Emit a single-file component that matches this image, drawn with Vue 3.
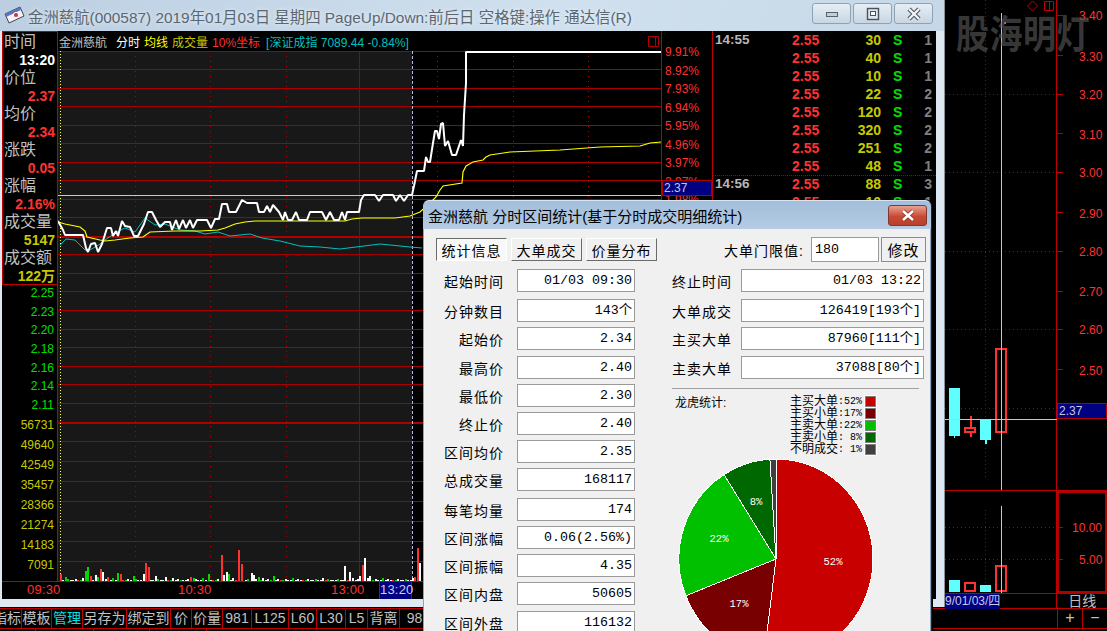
<script setup>
const stats = [
  ['时间', '13:20', 'white'],
  ['价位', '2.37', 'red'],
  ['均价', '2.34', 'red'],
  ['涨跌', '0.05', 'red'],
  ['涨幅', '2.16%', 'red'],
  ['成交量', '5147', 'olive'],
  ['成交额', '122万', 'olive']
]
const priceAxis = ['2.25', '2.23', '2.20', '2.18', '2.16', '2.14', '2.11']
const volAxis = ['56731', '49640', '42549', '35457', '28366', '21274', '14183', '7091']
const percents = ['9.91%', '8.92%', '7.93%', '6.94%', '5.95%', '4.96%', '3.97%', '2.97%', '1.98%']

const gridLines = [51, 69, 88, 106, 125, 143, 162, 180, 199, 217, 254, 273, 291, 310, 329, 347, 366, 384, 403, 441, 461, 481, 501, 521, 541, 561]
const dottedX = [135, 210, 286, 437, 513, 588]

const whiteLine = '58,221 63,230 65,235 83,235 86,248 88,252 91,244 95,243 98,252 102,244 107,228 111,228 113,236 116,231 118,236 122,221 125,226 130,227 134,236 138,236 144,224 148,212 152,212 156,220 160,227 165,222 170,222 172,230 176,220 179,229 183,220 186,228 190,220 193,228 197,220 207,220 211,228 215,219 219,219 222,204 227,204 229,212 236,212 242,200 247,203 257,203 259,212 264,212 267,206 270,212 273,205 279,212 283,220 285,212 288,220 292,220 296,212 299,220 307,220 310,212 322,212 326,220 330,212 334,220 339,220 342,212 345,220 347,212 359,212 361,200 364,195 375,195 379,201 383,195 393,195 396,201 400,195 404,201 408,195 412,195 414,186 416,176 417,171 424,171 426,157 428,162 430,162 433,143 435,131 437,131 439,139 441,124 443,123 445,146 448,141 452,155 456,155 459,146 461,140 463,146 464,115 466,83 466,52 661,52'
const avgLine = '58,222 65,224 80,227 85,231 87,237 100,240 105,241 115,240 130,238 143,237 150,232 175,231 200,231 218,230 225,228 235,224 245,222 255,221 345,221 352,219 362,218 395,218 410,216 420,212 430,203 436,197 440,190 443,186 462,183 463,172 466,166 473,162 483,160 486,157 490,155 510,152 560,150 600,147 640,146 650,143 661,142'
const indexLine = '60,245 66,239 75,240 85,250 90,250 100,244 105,240 115,233 125,228 135,232 145,218 155,225 165,224 180,230 195,231 205,234 218,232 230,236 250,234 262,238 280,241 300,246 320,247 340,249 380,244 410,247 422,248'

const bigBars = [
  [60, 7, 'r'], [65, 4, 'g'], [85, 10, 'g'], [87, 14, 'g'], [90, 5, 'r'], [95, 6, 'w'], [97, 4, 'g'],
  [100, 12, 'r'], [102, 9, 'w'], [107, 4, 'r'], [117, 8, 'g'], [120, 7, 'r'], [133, 5, 'g'],
  [143, 7, 'w'], [145, 18, 'r'], [148, 14, 'r'], [155, 5, 'w'], [165, 4, 'w'], [190, 4, 'r'], [193, 3, 'g'],
  [208, 7, 'g'], [221, 26, 'r'], [223, 6, 'w'], [226, 9, 'w'], [228, 7, 'g'], [238, 31, 'r'], [241, 17, 'r'],
  [251, 8, 'w'], [253, 6, 'w'], [258, 4, 'g'], [273, 5, 'g'], [344, 15, 'w'], [349, 9, 'w'], [359, 5, 'w'],
  [362, 16, 'r'], [364, 23, 'w'], [367, 3, 'w'], [369, 5, 'w'], [414, 4, 'r'], [417, 33, 'r'], [419, 18, 'w']
]
const barColors = { r: '#ff3232', g: '#00d800', w: '#ffffff' }
const fillHeights = [1, 1, 2, 1, 1, 2, 1, 1, 3, 1, 2, 1]
const fillKinds = ['w', 'w', 'g', 'w', 'w', 'w', 'r', 'g', 'w']
const volumeBars = []
for (let i = 0; i < 141; i++) {
  const x = Math.round(62 + i * 2.5)
  if (bigBars.some((b) => Math.abs(b[0] - x) < 2)) continue
  volumeBars.push({ x, h: fillHeights[i % 12], color: barColors[fillKinds[i % 9]] })
}
bigBars.forEach((b) => volumeBars.push({ x: b[0], h: b[1], color: barColors[b[2]] }))

const ticks = [
  ['14:55', '30', '1'], ['', '40', '1'], ['', '10', '1'], ['', '22', '2'], ['', '120', '2'],
  ['', '320', '2'], ['', '251', '2'], ['', '48', '1'], ['14:56', '88', '3'], ['', '10', '1']
]

const toolItems = [
  ['指标', 22], ['模板', 30], ['管理', 31], ['另存为', 44], ['绑定到', 44], ['价', 21], ['价量', 31],
  ['981', 29], ['L125', 37], ['L60', 28], ['L30', 29], ['L5', 22], ['背离', 32], ['98', 30]
]

const leftFields = [
  ['起始时间', '01/03 09:30', 0], ['分钟数目', '143个', 7], ['起始价', '2.34', 5], ['最高价', '2.40', 6],
  ['最低价', '2.30', 5], ['终止价', '2.40', 5], ['区间均价', '2.35', 5], ['总成交量', '168117', 5],
  ['每笔均量', '174', 7], ['区间涨幅', '0.06(2.56%)', 5], ['区间振幅', '4.35', 5], ['区间内盘', '50605', 5],
  ['区间外盘', '116132', 6]
]
const rightFields = [
  ['终止时间', '01/03 13:22', 0], ['大单成交', '126419[193个]', 7], ['主买大单', '87960[111个]', 5], ['主卖大单', '37088[80个]', 6]
]

const legend = [
  ['主买大单', '52%', '#c80000'], ['主买小单', '17%', '#780000'], ['主卖大单', '22%', '#00c000'],
  ['主卖小单', '8%', '#006800'], ['不明成交', '1%', '#404040']
]

const pieCx = 776
const pieCy = 560
const pieRx = 97
const pieRy = 100
const shares = [
  [52, '#c80000'], [17, '#780000'], [22, '#00c000'], [8, '#006800'], [1, '#404040']
]
let turned = 0
const slices = shares.map(([pct, color]) => {
  const a0 = (turned / 100) * Math.PI * 2
  turned += pct
  const a1 = (turned / 100) * Math.PI * 2
  const x0 = pieCx + pieRx * Math.sin(a0)
  const y0 = pieCy - pieRy * Math.cos(a0)
  const x1 = pieCx + pieRx * Math.sin(a1)
  const y1 = pieCy - pieRy * Math.cos(a1)
  const large = pct > 50 ? 1 : 0
  return { color, d: `M${pieCx} ${pieCy}L${x0} ${y0}A${pieRx} ${pieRy} 0 ${large} 1 ${x1} ${y1}Z` }
})
const pieLabels = [['52%', 833, 566], ['17%', 739, 608], ['22%', 719, 543], ['8%', 756, 506]]

const dayTicks = [15, 55, 94, 133, 172, 212, 251, 291, 329, 369, 408]
const dayLabels = [
  ['3.40', 20], ['3.30', 61], ['3.20', 99], ['3.10', 139], ['3.00', 177],
  ['2.90', 218], ['2.80', 256], ['2.70', 296], ['2.60', 334], ['2.50', 375]
]
const dayDotted = [94, 172, 251, 329, 408, 527, 559]
</script>

<template>
  <div class="desktop">
    <div class="top">
      <section class="window">
        <header class="window__title">
          <svg class="window__icon" width="21" height="19" viewBox="0 0 21 19">
            <path d="M1 8 16 1l4 9-15 7z" fill="#f4f4f8" stroke="#444" />
            <path d="M1 8 16 1l1 3L2 11z" fill="#5a74c0" />
            <circle cx="12" cy="9" r="2.6" fill="#c83c50" stroke="#fff" />
          </svg>
          <span class="window__text">金洲慈航(000587) 2019年01月03日 星期四 PageUp/Down:前后日 空格键:操作 通达信(R)</span>
          <div class="window__buttons">
            <button class="win-btn">
              <svg width="14" height="8" viewBox="0 0 14 8"><rect x="1.5" y="2.5" width="11" height="4" fill="#c8ccd0" stroke="#56606a" /></svg>
            </button>
            <button class="win-btn">
              <svg width="14" height="14" viewBox="0 0 14 14"><rect x="1.5" y="1.5" width="11" height="11" fill="#dfe6ec" stroke="#48525c" stroke-width="1.4" /><rect x="4.5" y="4.5" width="5" height="4" fill="#fff" stroke="#48525c" /></svg>
            </button>
            <button class="win-btn">
              <svg width="16" height="14" viewBox="0 0 16 14"><path d="M3 2l10 10M13 2 3 12" stroke="#4a545e" stroke-width="4.4" /><path d="M3 2l10 10M13 2 3 12" stroke="#f4f6f8" stroke-width="2.4" /></svg>
            </button>
          </div>
        </header>

        <div class="board">
          <aside class="side">
            <div class="side__box">
              <template v-for="row in stats" :key="row[0]">
                <div class="side__label">{{ row[0] }}</div>
                <div class="side__value" :class="`is-${row[2]}`">{{ row[1] }}</div>
              </template>
            </div>
            <div class="side__axis">
              <div v-for="v in priceAxis" :key="v" class="side__price">{{ v }}</div>
              <div v-for="v in volAxis" :key="v" class="side__vol">{{ v }}</div>
            </div>
          </aside>

          <div class="legend-bar">
            <span class="legend-bar__name">金洲慈航</span>
            <span class="is-white">分时</span>
            <span class="is-yellow">均线</span>
            <span class="is-olive">成交量</span>
            <span class="is-red">10%坐标</span>
            <span class="legend-bar__index">[深证成指 7089.44 -0.84%]</span>
            <svg class="legend-bar__icon" width="11" height="11" viewBox="0 0 11 11">
              <path d="M.5.5h10v10H.5zM7.5.5v10" fill="none" stroke="#b00000" />
            </svg>
          </div>

          <svg class="plot" width="603" height="530" viewBox="58 51 603 530">
            <rect x="58" y="51" width="354" height="530" fill="#181818" />
            <g shape-rendering="crispEdges">
              <line v-for="y in gridLines" :key="y" x1="58" x2="661" :y1="y + 0.5" :y2="y + 0.5" stroke="#a80000" />
              <line x1="58" x2="661" y1="237" y2="237" stroke="#b00000" stroke-width="2" />
              <line x1="58" x2="661" y1="423" y2="423" stroke="#b00000" stroke-width="2" />
              <line v-for="x in dottedX" :key="x" :x1="x + 0.5" :x2="x + 0.5" y1="51" y2="581" stroke="#b00000" stroke-dasharray="1 4" />
              <line x1="359.5" x2="359.5" y1="51" y2="581" stroke="#a00000" />
              <line x1="412.5" x2="412.5" y1="51" y2="581" stroke="#b8b8e0" stroke-dasharray="3 2" />
              <line x1="60.5" x2="60.5" y1="51" y2="581" stroke="#ffff40" stroke-dasharray="1 2" />
              <line x1="58" x2="661" y1="195.5" y2="195.5" stroke="#c8c8c8" />
              <rect v-for="(b, i) in volumeBars" :key="i" :x="b.x" :y="581 - b.h" width="2" :height="b.h" :fill="b.color" />
            </g>
            <polyline :points="indexLine" fill="none" stroke="#00c0c0" />
            <polyline :points="avgLine" fill="none" stroke="#ffff00" stroke-width="1.2" />
            <polyline :points="whiteLine" fill="none" stroke="#ffffff" stroke-width="2" stroke-linejoin="bevel" />
          </svg>

          <div class="scale">
            <div v-for="p in percents" :key="p" class="scale__item">{{ p }}</div>
            <div class="price-tag scale__tag">2.37</div>
          </div>

          <div class="tape">
            <div v-for="(t, i) in ticks" :key="i" class="tape__row" :class="{ 'tape__row--minute': i === 8 }">
              <span class="tape__time">{{ t[0] }}</span>
              <span class="is-red">2.55</span>
              <span class="tape__vol is-olive">{{ t[1] }}</span>
              <span class="tape__side is-green">S</span>
              <span class="tape__count">{{ t[2] }}</span>
            </div>
          </div>

          <div class="time-axis">
            <span>09:30</span>
            <span>10:30</span>
            <span>13:00</span>
            <span class="time-axis__now">13:20</span>
          </div>
        </div>
      </section>

      <section class="day">
        <svg class="day__chart" width="162" height="593" viewBox="945 0 162 593">
          <g shape-rendering="crispEdges">
            <line v-for="y in dayDotted" :key="y" x1="945" x2="1057" :y1="y + 0.5" :y2="y + 0.5" stroke="#a80000" stroke-dasharray="1 3" />
            <line v-for="y in dayTicks" :key="y" x1="1057" x2="1063" :y1="y + 0.5" :y2="y + 0.5" stroke="#b00000" />
            <line x1="1057" x2="1063" y1="527.5" y2="527.5" stroke="#b00000" />
            <line x1="1057" x2="1063" y1="559.5" y2="559.5" stroke="#b00000" />
            <line x1="985.5" x2="985.5" y1="0" y2="477" stroke="#a80000" stroke-dasharray="1 3" />
            <line x1="985.5" x2="985.5" y1="510" y2="590" stroke="#a80000" stroke-dasharray="1 3" />
            <line x1="1056.5" x2="1056.5" y1="0" y2="593" stroke="#c00000" />
            <line x1="945" x2="1107" y1="490.5" y2="490.5" stroke="#c00000" />

            <rect x="954" y="430" width="1" height="8" fill="#60ffff" />
            <rect x="949" y="388" width="11" height="48" fill="#60ffff" />
            <rect x="970" y="416" width="2" height="21" fill="#ff3232" />
            <rect x="965" y="428" width="10" height="4" fill="#000" stroke="#ff3232" stroke-width="2" />
            <rect x="985" y="436" width="2" height="8" fill="#60ffff" />
            <rect x="980" y="419" width="11" height="21" fill="#60ffff" />
            <rect x="1001" y="432" width="1" height="20" fill="#60ffff" />
            <rect x="996" y="349" width="10" height="83" fill="#000" stroke="#ff3232" stroke-width="2" />

            <rect x="949" y="580" width="11" height="12" fill="#60ffff" />
            <rect x="965" y="583" width="10" height="8" fill="#000" stroke="#ff3232" stroke-width="2" />
            <rect x="980" y="585" width="11" height="7" fill="#60ffff" />
            <rect x="996" y="566" width="10" height="25" fill="#000" stroke="#ff3232" stroke-width="2" />

            <line x1="1001.5" x2="1001.5" y1="13" y2="490" stroke="#c8c8c8" />
            <line x1="1001.5" x2="1001.5" y1="506" y2="593" stroke="#c8c8c8" />
            <line x1="945" x2="1057" y1="419.5" y2="419.5" stroke="#c8c8c8" />
            <rect x="1004" y="22" width="2" height="2" fill="#ff40ff" />
            <rect x="1058" y="492" width="48" height="100" fill="none" stroke="#b00000" stroke-width="2" />
          </g>
          <text v-for="l in dayLabels" :key="l[0]" class="day__label" x="1079" :y="l[1]">{{ l[0] }}</text>
          <text class="day__label" x="1072" y="532">10.00</text>
          <text class="day__label" x="1079" y="564">5.00</text>
          <path d="M1032.5 1l5 5-5 5-5-5z" fill="none" stroke="#c00000" />
          <path d="M1044.5 1.500h9v9h-9zM1049.500 1.500v9" fill="none" stroke="#c00000" />
        </svg>
        <div class="price-tag day__tag">2.37</div>
        <div class="day__stamp">股海明灯</div>
        <div class="day__footer">
          <div class="day__date">9/01/03/四</div>
          <div class="day__period">日线</div>
        </div>
      </section>
    </div>

    <nav class="tools">
      <div
        v-for="item in toolItems"
        :key="item[0]"
        class="tools__item"
        :class="{ 'is-cyan': item[0] === '管理' }"
        :style="{ width: item[1] + 'px' }"
      >{{ item[0] }}</div>
      <div class="tools__zoom">+</div>
      <div class="tools__zoom">−</div>
    </nav>
    <div class="tabs">
      <i class="tabs__cell tabs__cell--a"></i>
      <i class="tabs__cell tabs__cell--b"></i>
      <i class="tabs__cell tabs__cell--c"></i>
      <i class="tabs__cell tabs__cell--d"></i>
    </div>

    <section class="dialog">
      <header class="dialog__title">
        <span>金洲慈航 分时区间统计(基于分时成交明细统计)</span>
        <button class="dialog__close">
          <svg width="16" height="13" viewBox="0 0 16 13"><path d="M3 2l10 9M13 2 3 11" stroke="#8a3020" stroke-width="4.2" /><path d="M3 2l10 9M13 2 3 11" stroke="#fff" stroke-width="2.6" /></svg>
        </button>
      </header>
      <div class="dialog__body">
        <div class="pane">
          <div class="pane__tabs">
            <button class="tab tab--on">统计信息</button>
            <button class="tab">大单成交</button>
            <button class="tab">价量分布</button>
          </div>
          <div
            v-for="f in leftFields"
            :key="f[0]"
            class="field"
            :class="`field--gap${f[2]}`"
          >
            <label class="field__label">{{ f[0] }}</label>
            <div class="field__value">{{ f[1] }}</div>
          </div>
        </div>

        <div class="pane pane--right">
          <div class="limit">
            <label>大单门限值:</label>
            <div class="limit__input">180</div>
            <button class="limit__btn">修改</button>
          </div>
          <div
            v-for="f in rightFields"
            :key="f[0]"
            class="field field--wide"
            :class="`field--gap${f[2]}`"
          >
            <label class="field__label">{{ f[0] }}</label>
            <div class="field__value">{{ f[1] }}</div>
          </div>
          <hr class="pane__rule" />
          <div class="tiger">
            <div class="tiger__title">龙虎统计:</div>
            <div class="tiger__legend">
              <div v-for="l in legend" :key="l[0]" class="tiger__row">
                <span class="tiger__name">{{ l[0] }}</span>
                <span class="tiger__pct">:{{ l[1].padStart(3, '\u00a0') }}</span>
                <i class="tiger__swatch" :style="{ background: l[2] }"></i>
              </div>
            </div>
          </div>
          <svg class="pie" width="200" height="175" viewBox="676 459 200 175">
            <path v-for="s in slices" :key="s.color" :d="s.d" :fill="s.color" stroke="#ffffff" stroke-width="1" shape-rendering="crispEdges" />
            <text v-for="p in pieLabels" :key="p[0]" class="pie__label" :x="p[1]" :y="p[2]" text-anchor="middle">{{ p[0] }}</text>
          </svg>
        </div>
      </div>
    </section>
  </div>
</template>

<style>
html,
body {
  margin: 0;
  background: #000;
}
</style>

<style scoped>
.desktop {
  position: relative;
  width: 1107px;
  height: 631px;
  overflow: hidden;
  background: #000;
  font-family: "Liberation Sans", "Noto Sans CJK SC", sans-serif;
  color: #c0c0c0;
}

.top {
  display: flex;
  height: 608px;
}

.is-red { color: #ff3232; }
.is-green { color: #00e000; }
.is-white { color: #ffffff; }
.is-yellow { color: #ffff00; }
.is-olive { color: #c8c800; }
.is-cyan { color: #00e0e0; }

/* main terminal window */
.window {
  box-sizing: border-box;
  width: 945px;
  height: 607px;
  padding: 0 8px 8px 2px;
  background: #dde8f3;
  border-right: 1px solid #8c9298;
}

.window__title {
  display: flex;
  align-items: center;
  height: 31px;
  margin-left: -2px;
  margin-right: -8px;
  padding: 0 11px 0 4px;
  background: linear-gradient(100deg, #bccfe2, #d0e0ee 60%, #c6d8e8);
}

.window__icon {
  flex-shrink: 0;
  margin: 0 3px 0 0;
}

.window__text {
  flex: 1;
  font-size: 15.400px;
  color: #5a6773;
  white-space: nowrap;
  text-shadow: 0 0 4px rgba(255, 255, 255, 0.8);
}

.window__buttons {
  display: flex;
  gap: 2px;
  margin-top: -4px;
}

.win-btn {
  display: flex;
  align-items: center;
  justify-content: center;
  width: 39px;
  height: 21px;
  padding: 0;
  border: 1px solid #8ea2b4;
  border-radius: 3px;
  background: linear-gradient(#e6eef5, #c8d6e2);
}

.board {
  display: grid;
  grid-template-columns: 56px 603px 51px 224px;
  grid-template-rows: 20px 530px 18px;
  background: #000;
}

.side {
  grid-column: 1;
  grid-row: 1 / 3;
  border-right: 1px solid #c00000;
  box-sizing: border-box;
  width: 56px;
}

.side__box {
  box-sizing: border-box;
  height: 254px;
  margin-right: -1px;
  padding-top: 1px;
  border: 1px solid #c00000;
}

.side__label {
  height: 18px;
  padding-left: 1px;
  font-size: 16px;
  line-height: 18px;
  white-space: nowrap;
}

.side__value {
  height: 18px;
  padding-right: 2px;
  font-size: 14px;
  font-weight: 700;
  line-height: 18px;
  text-align: right;
}

.side__axis {
  margin-top: -1px;
  padding-right: 3px;
  font-size: 12px;
  text-align: right;
}

.side__price {
  height: 18.67px;
  line-height: 18px;
  color: #00e000;
}

.side__vol {
  height: 20px;
  line-height: 20px;
  color: #c8c800;
}

.legend-bar {
  grid-column: 2;
  grid-row: 1;
  display: flex;
  align-items: center;
  gap: 4px;
  padding-left: 1px;
  font-size: 12px;
  white-space: nowrap;
}

.legend-bar__name { margin-right: 5px; }
.legend-bar__index { margin-left: 2px; color: #00c0c0; }
.legend-bar__icon { margin: 0 2px 0 auto; }

.plot {
  grid-column: 2;
  grid-row: 2;
  display: block;
}

.scale {
  position: relative;
  grid-column: 3;
  grid-row: 1 / 4;
  padding-top: 12px;
  border-left: 1px solid #c00000;
  box-sizing: border-box;
  overflow: hidden;
}

.scale__item {
  height: 18.5px;
  padding-left: 3px;
  font-size: 12px;
  line-height: 18px;
  color: #ff3232;
}

.price-tag {
  box-sizing: border-box;
  height: 16px;
  padding-left: 1px;
  background: #000080;
  border: 1px solid #b00000;
  font-size: 12px;
  line-height: 14px;
  color: #c8c8d8;
}

.scale__tag {
  position: absolute;
  top: 149px;
  left: 0;
  right: 0;
}

.tape {
  grid-column: 4;
  grid-row: 1 / 4;
  box-sizing: border-box;
  border-left: 1px solid #c00000;
  overflow: hidden;
}

.tape__row {
  display: grid;
  grid-template-columns: 79px 38px 51px 24px 27px;
  height: 18px;
  box-sizing: border-box;
  font-size: 14px;
  font-weight: 700;
  line-height: 18px;
}

.tape__row--minute { border-top: 1px dotted #b00000; line-height: 16px; }
.tape__time { padding-left: 2px; font-size: 13.500px; color: #b8b8b8; }
.tape__vol { text-align: right; }
.tape__side { padding-left: 12px; }
.tape__count { text-align: right; color: #808080; }

.time-axis {
  grid-column: 1 / 3;
  grid-row: 3;
  display: grid;
  grid-template-columns: 151px 153px 48px 33px;
  padding-left: 25px;
  border-top: 1px solid #c00000;
  box-sizing: border-box;
  height: 18px;
  font-size: 13px;
  line-height: 16px;
  color: #ff3232;
  letter-spacing: 0.2px;
}

.time-axis__now {
  background: #000080;
  border-left: 1px solid #c00000;
  border-right: 1px solid #c00000;
  text-align: center;
  color: #d0d0f0;
}

/* daily chart on the right */
.day {
  position: relative;
  width: 162px;
  height: 608px;
}

.day__chart { display: block; }

.day__label {
  font-size: 12px;
  fill: #ff3232;
}

.day__tag {
  position: absolute;
  top: 403px;
  left: 112px;
  width: 50px;
}

.day__stamp {
  position: absolute;
  top: 11px;
  left: 11px;
  font-size: 33px;
  font-weight: 700;
  line-height: 48px;
  letter-spacing: 0.500px;
  white-space: nowrap;
  color: rgba(92, 92, 92, 0.62);
  transform: scaleY(1.18);
}

.day__footer {
  display: flex;
  height: 15px;
  border-top: 1px solid #b00000;
}

.day__date {
  width: 56px;
  background: #000080;
  font-size: 12px;
  line-height: 15px;
  white-space: nowrap;
  color: #c8c8e8;
}

.day__period {
  width: 50px;
  margin-left: 56px;
  border-left: 1px solid #c00000;
  font-size: 14px;
  line-height: 15px;
  text-align: center;
}

/* toolbars under the window */
.tools {
  display: flex;
  height: 19px;
  border-top: 1px solid #c00000;
  border-bottom: 1px solid #c00000;
  font-size: 14px;
  line-height: 18px;
}

.tools__item {
  box-sizing: border-box;
  flex-shrink: 0;
  display: flex;
  justify-content: center;
  overflow: hidden;
  border-right: 1px solid #c00000;
  white-space: nowrap;
}

.tools__item:first-child { justify-content: flex-end; }

.tools__zoom {
  box-sizing: border-box;
  flex-shrink: 0;
  width: 25px;
  border-left: 1px solid #c00000;
  text-align: center;
  font-size: 16px;
}

.tools__item:nth-last-child(3) { margin-right: 627px; }

.tabs { display: flex; height: 3px; }
.tabs__cell { border-right: 1px solid #c00000; }
.tabs__cell--a { width: 35px; }
.tabs__cell--b { width: 57px; }
.tabs__cell--c { width: 55px; }
.tabs__cell--d { width: 56px; }

/* statistics dialog */
.dialog {
  position: absolute;
  left: 423px;
  top: 200px;
  width: 508px;
  height: 440px;
  box-sizing: border-box;
  border-radius: 6px 6px 0 0;
  border: 1px solid #8aa4c0;
  border-top-color: #d8e4f0;
  background: #f0f0f0;
  box-shadow: 1px 0 0 #222, 2px 0 0 #000;
  color: #000;
}

.dialog__title {
  display: flex;
  align-items: center;
  justify-content: space-between;
  height: 28px;
  padding: 0 4px 0 5px;
  margin: 0 -1px;
  border-radius: 6px 6px 0 0;
  background: linear-gradient(#a2bedb, #b5cce3);
  font-size: 15px;
  white-space: nowrap;
}

.dialog__close {
  display: flex;
  align-items: center;
  justify-content: center;
  width: 39px;
  height: 21px;
  padding: 0;
  border: 1px solid #7e3a30;
  border-radius: 3px;
  background: linear-gradient(#e8a294, #c84a34 55%, #b8402c);
}

.dialog__body {
  display: flex;
  padding: 0 0 0 11px;
  border-left: 1px solid #f4f4f4;
}

.pane { width: 236px; }

.pane__tabs {
  display: flex;
  gap: 4px;
  margin: 9px 0 8px;
  white-space: nowrap;
}

.tab {
  box-sizing: border-box;
  width: 71px;
  height: 23px;
  padding: 0;
  border: 1px solid;
  border-color: #fff #6c6c6c #6c6c6c #fff;
  background: #f0f0f0;
  font: inherit;
  font-size: 14px;
  letter-spacing: 1px;
  color: #000;
}

.tab--on {
  border-color: #6c6c6c #fff #fff #6c6c6c;
  background: #f8f8f8;
}

.field {
  display: flex;
  align-items: center;
  height: 23px;
  white-space: nowrap;
}

.field--gap0 { margin-top: 0; }
.field--gap5 { margin-top: 5px; }
.field--gap6 { margin-top: 6px; }
.field--gap7 { margin-top: 7px; }

.field__label {
  width: 68px;
  font-size: 14px;
  letter-spacing: 1px;
  text-align: right;
}

.field__value {
  box-sizing: border-box;
  width: 118px;
  height: 23px;
  margin-left: 13px;
  padding-right: 2px;
  border: 1px solid #9a9a9a;
  background: #fff;
  font-family: "Liberation Mono", "Noto Sans CJK SC", monospace;
  font-size: 13.330px;
  line-height: 21px;
  text-align: right;
}

.pane--right { width: 254px; }

.limit {
  display: flex;
  justify-content: flex-end;
  align-items: center;
  height: 25px;
  margin: 8px 0 7px;
  font-size: 14px;
  letter-spacing: 1px;
  white-space: nowrap;
}

.limit label { margin-right: 7px; }

.limit__input {
  box-sizing: border-box;
  width: 68px;
  height: 25px;
  padding-left: 3px;
  border: 1px solid #9a9a9a;
  background: #fff;
  font-family: "Liberation Mono", monospace;
  font-size: 13.330px;
  line-height: 23px;
  letter-spacing: 0;
}

.limit__btn {
  box-sizing: border-box;
  width: 45px;
  height: 25px;
  margin-left: 2px;
  padding: 0;
  border: 1px solid;
  border-color: #fff #6c6c6c #6c6c6c #fff;
  outline: 1px solid #8c8c8c;
  outline-offset: -1px;
  background: #f0f0f0;
  font: inherit;
  font-size: 15px;
  letter-spacing: 1px;
}

.field--wide .field__label {
  width: 59px;
  font-size: 14px;
  text-align: left;
}

.field--wide .field__value {
  width: 183px;
  margin-left: 10px;
}

.pane__rule {
  width: 247px;
  height: 1px;
  margin: 9px 0 0;
  border: 0;
  background: #a0a0a0;
}

.tiger {
  display: flex;
  height: 60px;
  margin-top: 6px;
  font-size: 12px;
}

.tiger__title {
  width: 115px;
  padding-left: 3px;
  line-height: 16px;
}

.tiger__row {
  display: flex;
  align-items: center;
  height: 12px;
  white-space: nowrap;
}

.tiger__name {
  width: 48px;
  line-height: 12px;
}

.tiger__pct {
  width: 24px;
  font-family: "Liberation Mono", monospace;
  font-size: 10px;
  text-align: right;
}

.tiger__swatch {
  box-sizing: border-box;
  width: 11px;
  height: 11px;
  margin-left: 3px;
  border: 1px solid #808080;
  outline: 1px solid #fff;
  outline-offset: 0;
}

.pie {
  display: block;
  margin: 3px 0 0 4px;
}

.pie__label {
  font-family: "Liberation Mono", monospace;
  font-size: 10.500px;
  fill: #fff;
}
</style>
